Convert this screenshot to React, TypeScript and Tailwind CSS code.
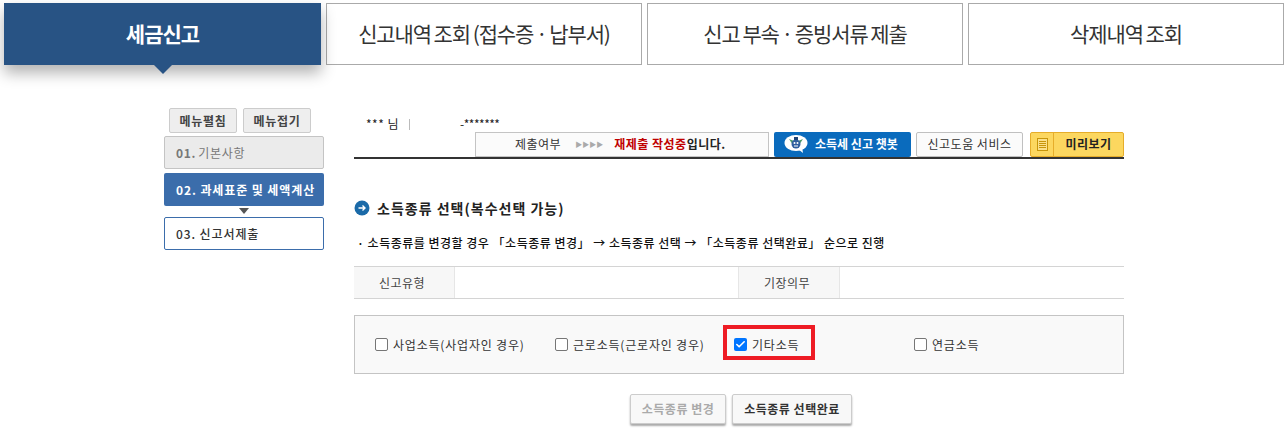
import { Check } from "lucide-react";

const font = "font-['Noto_Sans_CJK_KR','Noto_Sans',sans-serif]";

function ChatbotIcon() {
    return (
        <svg width="24" height="20" viewBox="0 0 24 20" className="shrink-0 -ml-[1px]">
            <ellipse cx="12" cy="9" rx="11.5" ry="8" fill="#ffffff" />
            <path d="M14 15 L19 19 L18 13 Z" fill="#ffffff" />
            <path d="M5 5 L10 7 L9 11 Z" fill="#4d9a6a" />
            <path d="M19 5 L14 7 L15 11 Z" fill="#4d9a6a" />
            <circle cx="12" cy="10" r="4.5" fill="#2f5f9e" />
            <circle cx="10.5" cy="9" r="1" fill="#ffffff" />
            <circle cx="13.5" cy="9" r="1" fill="#ffffff" />
            <path d="M10 12 H14" stroke="#ffffff" strokeWidth="1" />
            <rect x="10" y="3" width="4" height="3" fill="#1f4477" />
        </svg>
    );
}

function ArrowDot() {
    return (
        <svg width="16" height="16" viewBox="0 0 16 16" className="shrink-0">
            <circle cx="8" cy="8" r="7.5" fill="#1a6aa8" />
            <path d="M4.5 8 H11 M8.5 5.5 L11 8 L8.5 10.5" fill="none" stroke="#ffffff" strokeWidth="1.4" />
        </svg>
    );
}

function CheckItem({ label, checked, width }: { label: string; checked?: boolean; width: string }) {
    return (
        <div className={`flex items-center gap-[5px] ${width}`}>
            {checked ? (
                <span className="w-[13px] h-[13px] rounded-[2px] bg-[#0075ff] flex items-center justify-center">
                    <Check size={11} strokeWidth={3.5} color="#ffffff" />
                </span>
            ) : (
                <span className="w-[13px] h-[13px] rounded-[2px] border border-[#767676] bg-white" />
            )}
            <span className="text-[12px] text-[#333] tracking-[0.8px] whitespace-nowrap">{label}</span>
        </div>
    );
}

export default function App() {
    const tabs = ["신고내역 조회 (접수증 · 납부서)", "신고 부속 · 증빙서류 제출", "삭제내역 조회"];

    return (
        <div className={`w-[1288px] h-[434px] overflow-hidden bg-white ${font}`}>
            {/* top tabs */}
            <div className="flex gap-[5px] pl-[4px] pt-[3px]">
                <div className="relative w-[317px] h-[62px] bg-[#285384] shadow-[0_8px_14px_rgba(0,0,0,0.3)] flex items-center justify-center text-white text-[21px] font-bold tracking-[-1px]">
                    세금신고
                    <span className="absolute left-[150px] top-[62px] w-0 h-0 border-x-[9px] border-x-transparent border-t-[9px] border-t-[#285384]" />
                </div>
                {tabs.map((tab) => (
                    <div
                        key={tab}
                        className="w-[316px] h-[62px] border border-[#aaa] flex items-center justify-center text-[21px] text-[#333] tracking-[-1.1px] [word-spacing:-1px]"
                    >
                        {tab}
                    </div>
                ))}
            </div>

            <div className="flex pl-[164px] pt-[43px]">
                {/* left menu */}
                <div className="w-[160px] text-[12px] tracking-[0.7px]">
                    <div className="flex gap-[6px] pl-[5px]">
                        <div className="w-[68px] h-[25px] bg-[#eeeeee] border border-[#ccc] rounded-[2px] flex items-center justify-center font-bold text-[#444]">
                            메뉴펼침
                        </div>
                        <div className="w-[68px] h-[25px] bg-[#eeeeee] border border-[#ccc] rounded-[2px] flex items-center justify-center font-bold text-[#444]">
                            메뉴접기
                        </div>
                    </div>
                    <div className="mt-[3px] h-[33px] bg-[#ebebeb] border border-[#c4c4c4] rounded-[2px] flex items-center pl-[11px] text-[#777]">
                        <b className="mr-[2px]">01.</b> 기본사항
                    </div>
                    <div className="mt-[4px] h-[33px] bg-[#3b6dab] rounded-[2px] flex items-center pl-[12px] text-white font-bold whitespace-nowrap tracking-[0.9px]">
                        02. 과세표준 및 세액계산
                    </div>
                    <div className="flex justify-center h-[11px] pt-[2px]">
                        <span className="w-0 h-0 border-x-[5px] border-x-transparent border-t-[6px] border-t-[#555]" />
                    </div>
                    <div className="h-[33px] bg-white border border-[#3b6dab] rounded-[2px] flex items-center pl-[11px] text-[#333] font-medium tracking-[0.9px]">
                        03. 신고서제출
                    </div>
                </div>

                {/* main content */}
                <div className="ml-[30px] w-[770px] text-[12px] tracking-[0.5px]">
                    <div className="flex items-center h-[16px] mt-[8px] pl-[12px] text-[#222]">
                        <span>*** 님</span>
                        <span className="ml-[10px] w-px h-[11px] bg-[#bbb]" />
                        <span className="ml-[50px] tracking-[-0.5px]">-*******</span>
                    </div>
                    <div className="flex justify-end items-center gap-[5px] h-[27px] border-b-[2px] border-[#333] pb-[1px]">
                        <div className="w-[294px] h-[25px] border border-[#c4c4c4] bg-[#fbfbfb] flex items-center pl-[39px] text-[#333]">
                            <span>제출여부</span>
                            <span className="ml-[14px] text-[7px] tracking-[0px] text-[#aaa]">▶▶▶▶</span>
                            <span className="ml-[11px] text-[#c00000] font-bold">재제출 작성중</span>
                            <span className="font-bold text-[#222]">입니다.</span>
                        </div>
                        <div className="w-[137px] h-[25px] bg-[#0a6bbd] rounded-[2px] flex items-center pl-[11px] gap-[7px] text-white font-bold">
                            <ChatbotIcon />
                            <span className="tracking-[0px] whitespace-nowrap">소득세 신고 챗봇</span>
                        </div>
                        <div className="w-[107px] h-[25px] bg-[#fbfbfb] border border-[#c0c0c0] rounded-[2px] flex items-center justify-center text-[#333] whitespace-nowrap">
                            신고도움 서비스
                        </div>
                        <div className="ml-[2px] w-[94px] h-[25px] bg-[#fcd75f] border border-[#e6ad2a] rounded-[2px] flex items-center text-[#222] font-bold">
                            <div className="w-[23px] h-full border-r border-[#e6ad2a] flex items-center justify-center">
                                <svg width="11" height="13" viewBox="0 0 11 13">
                                    <rect x="0.5" y="0.5" width="10" height="12" fill="#fbe08a" stroke="#c8960a" />
                                    <path d="M2 3.5H9M2 5.5H9M2 7.5H9M2 9.5H9" stroke="#c8960a" strokeWidth="1" />
                                </svg>
                            </div>
                            <span className="flex-1 text-center">미리보기</span>
                        </div>
                    </div>

                    <div className="mt-[39px] flex items-center gap-[7px] h-[20px] font-bold text-[14px] tracking-[1px] text-[#222]">
                        <ArrowDot />
                        소득종류 선택(복수선택 가능)
                    </div>
                    <div className="mt-[16px] h-[18px] flex items-center pl-[3px] text-[#111] font-medium whitespace-nowrap">
                        · 소득종류를 변경할 경우 「소득종류 변경」 → 소득종류 선택 → 「소득종류 선택완료」 순으로 진행
                    </div>

                    {/* table */}
                    <div className="mt-[14px] h-[33px] border-y border-[#d4d4d4] flex text-[#444]">
                        <div className="w-[101px] pr-[4px] bg-[#f7f7f7] border-r border-[#e6e6e6] flex items-center justify-center">신고유형</div>
                        <div className="w-[283px]" />
                        <div className="w-[102px] pr-[4px] bg-[#f7f7f7] border-x border-[#e6e6e6] flex items-center justify-center">기장의무</div>
                    </div>

                    {/* income type checks */}
                    <div className="mt-[16px] h-[59px] bg-[#f9f9f9] border border-[#c4c4c4] flex items-center pl-[20px]">
                        <CheckItem label="사업소득(사업자인 경우)" width="w-[180px]" />
                        <CheckItem label="근로소득(근로자인 경우)" width="w-[179px]" />
                        <CheckItem label="기타소득" checked width="w-[180px] relative after:absolute after:content-[''] after:left-[-11px] after:top-[-11px] after:w-[92px] after:h-[35px] after:border-[4px] after:border-[#ee1c25]" />
                        <CheckItem label="연금소득" width="w-[120px]" />
                    </div>

                    <div className="mt-[20px] flex justify-center gap-[6px] pl-[4px] font-bold">
                        <div className="w-[96px] h-[30px] bg-[#f8f8f8] border border-[#ccc] rounded-[2px] shadow-[0_2px_2px_#aaa] flex items-center justify-center text-[#aaa] whitespace-nowrap">
                            소득종류 변경
                        </div>
                        <div className="w-[120px] h-[30px] bg-[#f8f8f8] border border-[#ccc] rounded-[2px] shadow-[0_2px_2px_#aaa] flex items-center justify-center text-[#333] whitespace-nowrap">
                            소득종류 선택완료
                        </div>
                    </div>
                </div>
            </div>
        </div>
    );
}
